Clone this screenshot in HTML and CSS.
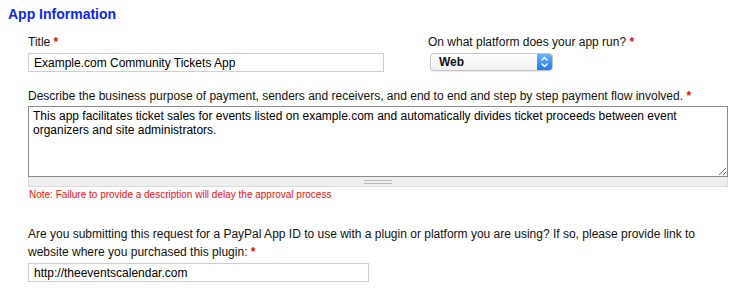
FILE: index.html
```html
<!DOCTYPE html>
<html lang="en">
<head>
    <meta charset="UTF-8">
    <title>App Information</title>
    <link rel="stylesheet" href="styles.css">
</head>
<body>
    <h2 class="section-title">App Information</h2>
    <div class="fieldset">
        <div class="row">
            <div class="field field-title">
                <label for="title">Title <span class="req">*</span></label>
                <input type="text" id="title" class="text-input title-input" value="Example.com Community Tickets App">
            </div>
            <div class="field field-platform">
                <label for="platform">On what platform does your app run? <span class="req">*</span></label>
                <div class="select">
                    <span class="select-value">Web</span>
                    <span class="select-arrow">
                        <svg width="9" height="12" viewBox="0 0 9 12">
                            <path d="M1.5 4.5 L4.5 1.5 L7.5 4.5 M1.5 7.5 L4.5 10.5 L7.5 7.5" fill="none" stroke="#fff" stroke-width="1.4"/>
                        </svg>
                    </span>
                </div>
            </div>
        </div>

        <div class="field field-desc">
            <label for="desc">Describe the business purpose of payment, senders and receivers, and end to end and step by step payment flow involved. <span class="req">*</span></label>
            <div class="resizable">
                <textarea id="desc" class="desc-input">This app facilitates ticket sales for events listed on example.com and automatically divides ticket proceeds between event organizers and site administrators.</textarea>
                <div class="grippie"><span class="grip-lines"></span></div>
            </div>
            <p class="note">Note: Failure to provide a description will delay the approval process</p>
        </div>

        <div class="field field-plugin">
            <label for="plugin">Are you submitting this request for a PayPal App ID to use with a plugin or platform you are using? If so, please provide link to website where you purchased this plugin: <span class="req">*</span></label>
            <input type="text" id="plugin" class="text-input plugin-input" value="http://theeventscalendar.com">
        </div>
    </div>
</body>
</html>
```

FILE: styles.css
```css
body {
    margin: 0;
    padding: 6px 8px 0 8px;
    font-family: "Liberation Sans", Arial, sans-serif;
    font-size: 12px;
    color: #111;
    background: #fff;
}
.section-title {
    margin: 0;
    font-size: 14px;
    line-height: 16px;
    color: #0a28f0;
}
.fieldset {
    padding: 13px 0 0 20px;
}
.row {
    display: flex;
}
.field label {
    display: block;
    line-height: 14px;
    margin-bottom: 4px;
}
.req {
    color: #e01010;
    font-weight: bold;
}
.field-title {
    width: 400px;
}
.text-input {
    display: block;
    box-sizing: border-box;
    height: 19px;
    margin: 0;
    padding: 1px 5px;
    border: 1px solid #cfcfcf;
    font-family: "Liberation Sans", Arial, sans-serif;
    font-size: 12px;
    color: #000;
    background: #fff;
}
.title-input {
    width: 356px;
}
.select {
    display: flex;
    align-items: center;
    box-sizing: border-box;
    width: 123px;
    height: 18px;
    margin-left: 2px;
    border: 1px solid #c4c4c4;
    border-radius: 4px;
    background: linear-gradient(#ffffff, #f1f1f1);
    box-shadow: 0 1px 1px rgba(0, 0, 0, 0.08);
    overflow: hidden;
}
.select-value {
    flex: 1;
    padding-left: 8px;
    font-weight: bold;
    font-size: 12px;
}
.select-arrow {
    display: flex;
    align-items: center;
    justify-content: center;
    width: 15px;
    height: 100%;
    background: linear-gradient(#6cb3fa, #1a7cf0);
}
.field-desc {
    margin-top: 17px;
}
.field-desc label {
    margin-bottom: 3px;
}
.resizable {
    width: 700px;
}
.desc-input {
    display: block;
    box-sizing: border-box;
    width: 700px;
    height: 71px;
    margin: 0;
    padding: 2px 4px;
    border: 1px solid #8a8a8a;
    font-family: "Liberation Sans", Arial, sans-serif;
    font-size: 12px;
    line-height: 14px;
    color: #000;
    resize: vertical;
}
.grippie {
    display: flex;
    justify-content: center;
    align-items: center;
    height: 10px;
    background: #eeeeee;
    border: 1px solid #dddddd;
    border-top: 0;
    box-sizing: border-box;
}
.grip-lines {
    width: 28px;
    height: 4px;
    border-top: 1px solid #bbb;
    border-bottom: 1px solid #bbb;
    box-sizing: border-box;
}
.note {
    margin: 2px 0 0 1px;
    font-size: 10px;
    line-height: 12px;
    color: #ee1111;
}
.field-plugin {
    margin-top: 24px;
}
.field-plugin label {
    line-height: 18px;
    margin-bottom: 2px;
}
.plugin-input {
    width: 341px;
}
```
